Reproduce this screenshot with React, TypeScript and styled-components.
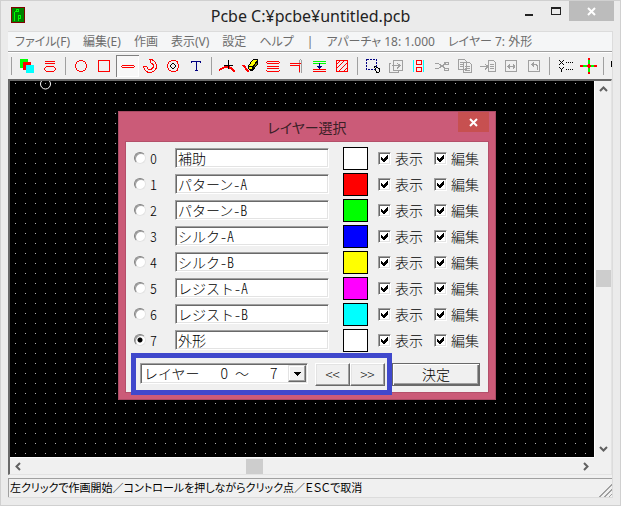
import React, { useState } from 'react';
import styled, { createGlobalStyle, css } from 'styled-components';

const uiFont = '"Noto Sans", "Noto Sans CJK JP", sans-serif';
const gothicFont = '"Noto Sans CJK JP", sans-serif';

const GlobalStyle = createGlobalStyle`
  * { box-sizing: border-box; }
  body { margin: 0; }
  button, input, select { font: inherit; color: inherit; margin: 0; padding: 0; border-radius: 0; }
`;

const Window = styled.main`
  position: relative;
  display: flex;
  flex-direction: column;
  height: 100vh;
  min-height: 440px;
  padding: 0 7px 7px;
  background: #ebebeb;
  border: 1px solid #d0d0d0;
  overflow: hidden;
  font-family: ${uiFont};
  font-size: 12px;
`;

const TitleBar = styled.header`
  position: relative;
  display: flex;
  justify-content: center;
  flex: 0 0 30px;
`;

const AppIcon = styled.svg`
  position: absolute;
  left: 3px;
  top: 6px;
`;

const Title = styled.h1`
  margin: 0;
  font-size: 16px;
  font-weight: 400;
  line-height: 30px;
  color: #222;
`;

const WindowControls = styled.div`
  position: absolute;
  right: -1px;
  top: 0;
  display: flex;
`;

const ControlButton = styled.button<{ $close?: boolean; $wide?: boolean }>`
  width: ${p => (p.$close ? 45 : p.$wide ? 26 : 28)}px;
  height: 20px;
  border: 0;
  background: ${p => (p.$close ? '#bcbcbc' : 'transparent')};
  svg { display: block; margin: auto; }
`;

const Client = styled.section`
  display: flex;
  flex-direction: column;
  flex: 1;
  min-height: 0;
  background: #f0f0f0;
  border: 1px solid #dcdcdc;
  border-width: 0 1px 1px 0;
`;

const MenuBar = styled.nav`
  display: flex;
  flex: 0 0 20px;
  align-items: center;
  gap: 13px;
  padding-left: 7px;
  background: #f5f6f7;
  border-top: 1px solid #dcdcdc;
  color: #6d6d6d;
  white-space: nowrap;
  overflow: hidden;
  font-feature-settings: "palt";
`;

const MenuItem = styled.button`
  border: 0;
  background: none;
  line-height: 18px;
`;

const MenuStatus = styled.span`
  line-height: 18px;
`;

const ToolBar = styled.div`
  display: flex;
  flex: 0 0 28px;
  padding: 2px 0 0;
  border-top: 1px solid #a0a0a0;
  box-shadow: inset 0 1px #fff;
  overflow: hidden;
`;

const Separator = styled.span`
  flex: 0 0 8px;
  height: 18px;
  margin-top: 3px;
  background: linear-gradient(#a0a0a0, #a0a0a0) 3px 0 / 1px 100% no-repeat;
`;

const ToolButton = styled.button<{ $pressed?: boolean }>`
  flex: 0 0 23px;
  height: 22px;
  border: 0;
  margin-top: 1px;
  background: none;
  svg { display: block; }
  ${p => p.$pressed && css`
    background: #f8f8f8;
    box-shadow: inset 1px 1px #808080, inset -1px -1px #fff;
  `}
`;

const Workspace = styled.div`
  display: grid;
  grid-template-columns: 1fr 17px;
  grid-template-rows: 1fr 17px;
  flex: 1;
  min-height: 0;
  border: solid;
  border-width: 2px 1px 1px 2px;
  border-color: #696969 #e3e3e3 #e3e3e3 #696969;
`;

const Board = styled.div`
  position: relative;
  overflow: hidden;
  background: #000;
  svg { position: absolute; inset: 0; }
`;

const ScrollTrack = styled.div<{ $vertical?: boolean }>`
  display: flex;
  flex-direction: ${p => (p.$vertical ? 'column' : 'row')};
  align-items: center;
  background: #f0f0f0;
  border: 0 solid #fff;
  border-width: ${p => (p.$vertical ? '0 0 0 1px' : '1px 0 0')};
`;

const ScrollArrow = styled.button`
  flex: 0 0 17px;
  width: 16px;
  height: 16px;
  border: 0;
  background: none;
  svg { display: block; margin: auto; }
`;

const ScrollSpace = styled.span<{ $grow: number }>`
  flex: ${p => p.$grow} 1 0;
`;

const ScrollThumb = styled.span<{ $vertical?: boolean }>`
  width: ${p => (p.$vertical ? 15 : 17)}px;
  height: ${p => (p.$vertical ? 17 : 15)}px;
  background: #cdcdcd;
`;

const StatusBar = styled.footer`
  display: flex;
  flex: 0 0 19px;
  justify-content: space-between;
  align-items: flex-end;
  margin-top: 3px;
  padding-left: 1px;
  border-top: 1px solid #a0a0a0;
  border-left: 1px solid #a0a0a0;
  color: #000;
  font-size: 11px;
  white-space: nowrap;
  span { line-height: 18px; font-feature-settings: "palt"; }
`;

const Dialog = styled.section`
  position: absolute;
  left: 117px;
  top: 110px;
  display: flex;
  flex-direction: column;
  width: 378px;
  padding: 0 6px 6px;
  background: #cb5b78;
  border: 1px solid #a94b64;
  font-family: ${gothicFont};
  font-size: 14px;
  font-weight: 300;
  font-feature-settings: "hwid";
  color: #000;
`;

const DialogTitleBar = styled.header`
  position: relative;
  height: 29px;
`;

const DialogTitle = styled.h2`
  margin: 0;
  font: 400 14px/30px ${gothicFont};
  font-feature-settings: "palt";
  text-align: center;
  color: #3b2027;
`;

const DialogClose = styled.button`
  position: absolute;
  right: 0;
  top: 0;
  width: 31px;
  height: 20px;
  border: 0;
  background: #c75050;
  svg { display: block; margin: auto; }
`;

const DialogBody = styled.form`
  padding: 3px 0 6px;
  background: #f0f0f0;
  border: 1px solid #b4506a;
`;

const LayerRow = styled.div`
  display: grid;
  grid-template-columns: 41px 154px 14px 25px 10px 56px 56px;
  align-items: center;
  height: 26px;
  padding-left: 8px;
  line-height: 20px;
  & > :nth-child(3) { grid-column: 4; }
  & > :nth-child(4) { grid-column: 6; }
`;

const Choice = styled.label`
  display: flex;
  align-items: center;
  gap: 4px;
`;

const Radio = styled.input`
  appearance: none;
  width: 12px;
  height: 12px;
  border: 1px solid;
  border-color: #808080 #e3e3e3 #e3e3e3 #808080;
  border-radius: 50%;
  background: #fff;
  box-shadow: inset 1px 1px #a0a0a0;
  &:checked { background: radial-gradient(circle, #000 2px, #fff 3px); }
`;

const sunken = css`
  border: 1px solid;
  border-color: #a0a0a0 #fff #fff #a0a0a0;
  box-shadow: inset 1px 1px #696969, inset -1px -1px #e3e3e3;
`;

const NameField = styled.input`
  ${sunken}
  width: 100%;
  height: 20px;
  padding-left: 2px;
  background: #fff;
  font-feature-settings: "hwid";
`;

const Swatch = styled.button<{ $color: string }>`
  height: 23px;
  border: 1px solid #000;
  background: ${p => p.$color};
`;

const CheckLabel = styled.label`
  display: flex;
  align-items: center;
  gap: 4px;
  white-space: nowrap;
`;

const CheckBox = styled.span`
  ${sunken}
  display: grid;
  width: 13px;
  height: 13px;
  background: #fff;
  input { appearance: none; grid-area: 1 / 1; width: 11px; height: 11px; }
  svg { grid-area: 1 / 1; pointer-events: none; visibility: hidden; }
  input:checked + svg { visibility: visible; }
`;

const Footer = styled.div`
  display: flex;
  gap: 7px;
  margin: 10px 8px 0 14px;
`;

const Combo = styled.div`
  ${sunken}
  display: grid;
  grid-template-columns: 1fr 18px;
  width: 168px;
  height: 21px;
  padding: 1px;
  background: #fff;
  select {
    grid-area: 1 / 1 / 2 / 3;
    appearance: none;
    border: 0;
    background: none;
    padding: 0 18px 0 2px;
    font-feature-settings: normal;
    line-height: 17px;
    outline: 0;
  }
`;

const ComboArrow = styled.span`
  grid-area: 1 / 2;
  display: grid;
  place-items: center;
  pointer-events: none;
  background: #f0f0f0;
  border: 1px solid;
  border-color: #e3e3e3 #696969 #696969 #e3e3e3;
  box-shadow: inset -1px -1px #a0a0a0, inset 1px 1px #fff;
`;

const PageButtons = styled.div`
  display: flex;
`;

const PushButton = styled.button<{ $wide?: boolean }>`
  flex: none;
  width: ${p => (p.$wide ? 88 : 35)}px;
  height: 23px;
  background: #f0f0f0;
  border: 1px solid;
  border-color: ${p => (p.$wide ? '#696969' : '#fff #696969 #696969 #fff')};
  box-shadow: ${p => (p.$wide
    ? 'inset 1px 1px #fff, inset -1px -1px #696969, inset -2px -2px #a0a0a0'
    : 'inset -1px -1px #a0a0a0, inset 1px 1px #e3e3e3')};
  line-height: 19px;
  font-feature-settings: "hwid";
`;

const Highlight = styled.span`
  position: absolute;
  left: 12px;
  bottom: 4px;
  width: 261px;
  height: 42px;
  border: 5px solid #3f48cc;
  pointer-events: none;
`;

const red = '#f00';
const grey = '#a0a0a0';
const navy = '#000080';

const glyphs: Record<string, React.ReactNode> = {
  レイヤー: <><path fill="#0f0" d="M4 4h8v9H4z" /><path fill={red} d="M7 7h8v8H7z" /><path fill="#0ff" d="M10 10h8v8h-8z" /></>,
  アパーチャ: <path stroke={red} d="M6 6.5h10M6 8.5h10M7 11.5h8M7 16.5h8M5.5 13v2M16.5 13v2M6 12.5h1M15 12.5h1M6 15.5h1M15 15.5h1" />,
  円: <path stroke={red} d="M9 5.500h4M9 16.500h4M5.500 9v4M16.500 9v4M7 6.500h2M13 6.500h2M7 15.500h2M13 15.500h2M6.500 7v2M15.500 7v2M6.500 13v2M15.500 13v2" />,
  四角: <path stroke={red} d="M5.5 5.5h11v11h-11z" />,
  ライン: <path stroke={red} d="M6 10.5h12M6 12.5h12M5 11.5h1M18 11.5h1" />,
  円弧: <path stroke={red} d="M11 4.500A6.500 6.500 0 1 1 4.500 11.500h3L9 14l3 .500 2-2v-3L11.500 7.500z" />,
  ドーナツ: <>
    <path stroke={red} d="M9 5.500h5M9 16.500h5M5.500 9v4M16.500 9v4M7 6.500h2M14 6.500h2M7 15.500h2M14 15.500h2M6.500 7v2M15.500 7v2M6.500 13v2M15.500 13v2" />
    <path stroke="#000" d="M10 8.500h2M10 13.500h2M8.500 10v2M13.500 10v2M9 9.500h1M12 9.500h1M9 12.500h1M12 12.500h1" />
  </>,
  文字: <path stroke={navy} d="M6.500 8V6.500h9V8M11.500 6v10M10 15.500h3" />,
  線編集: <><path stroke={red} strokeWidth="2" d="M3 15l6-3h4l3 2 3 3" /><path stroke="#000" d="M8 10.500h9M12.500 5v9" /></>,
  消去: <>
    <path stroke={red} strokeWidth="2" d="M4 10l5 6h1" />
    <path fill="#000" d="M14 4h4l1 1v4l-5 7h-3l-2-2v-3z" />
    <path fill="#ff0" d="M14 5h4l-4 6h-4zM10 12h3v2h-3z" />
    <path fill="#808000" d="M15 12l3-5v2l-3 4z" />
  </>,
  平行線: <path stroke={red} d="M5 6.500h12M4 7.500h1M17 7.500h1M5 8.500h12M5 11.500h12M5 13.500h12M5 16.500h12M4 15.500h1M17 15.500h1" />,
  延長: <><path stroke={grey} d="M14.500 5v13M16.500 5v13M15 4.500h1" /><path stroke={red} d="M5 8.500h11M5 10.500h10M14.500 10v7" /></>,
  間隔: <><path stroke="#0f0" d="M5 6.500h13M5 8.500h13" /><path stroke={red} d="M5 14.500h13M5 16.500h13" /><path stroke={navy} d="M11.500 8v6M9 11.500h5M10 12.500h3" /></>,
  塗り: <path stroke={red} d="M5.500 5.500h11v11h-11zM5 10l5-5M5 14l9-9M7 17L17 7M12 17l5-5" />,
  範囲選択: <><path stroke={navy} strokeDasharray="2 1" d="M4.500 4.500h10v10h-10z" /><path fill="#f0f0f0" stroke="#000" d="M12.500 11.500l5 2v3l-1 1h-2z" /></>,
  移動: <path stroke={grey} d="M8.500 5.500h9v10h-9zM6 8.500H4.500v9h9V16M7 10.500h7M12 8l3 2.500-3 3" />,
  部品: <><path stroke="#0ff" d="M5.500 5v12M15.500 5v12" /><path stroke={red} d="M8.500 5.500h5v4h-5zM8.500 12.500h5v4h-5z" /></>,
  切り取り: <path stroke={grey} d="M4 8.500h3l8 5M4 13.500h3l8-5M13 7.500h4v2h-4zM13 13.500h4v2h-4z" />,
  コピー: <path fill="#f0f0f0" stroke={grey} d="M4.500 4.500h6l2 2v8h-8zM9.500 7.500h6l2 2v8h-8zM6 7.500h3M6 9.500h3M6 11.500h3M11 11.500h5M11 13.500h5M11 15.500h5" />,
  貼り付け: <path stroke={grey} d="M11.500 5.500h5l2 2v9h-7zM13 9.500h4M13 11.500h4M13 13.500h4M3 11.500h7M8 9l3 2.500-3 3" />,
  左右反転: <path stroke={grey} d="M5.500 5.500h11v11h-11zM7 11.500h8M9.500 9v5M13.500 9v5M8.500 10v3M14.500 10v3" />,
  回転: <path stroke={grey} d="M5.500 5.500h11v11h-11zM8 9.500h5l1 1v4M8 9.500h2M9.500 8v3M10.500 7v5" />,
  座標: <><path stroke="#000" d="M5 5.500h1M9 5.500h1M6 6.500h1M8 6.500h1M7 7.500h1M6 8.500h1M8 8.500h1M5 9.500h1M9 9.500h1M5 12.500h1M9 12.500h1M6 13.500h1M8 13.500h1M7.500 14v3" /><path stroke="#000" strokeDasharray="1 1" d="M12 7.500h7M12 14.500h7" /></>,
  原点: <><path stroke="#0f0" strokeWidth="2" d="M5 11h14M12 5v13" /><path stroke={red} strokeWidth="2" d="M3 11h3M17 11h3M12 3v2M12 17v2M10 11h4M12 9v4" /></>,
  拡大: <path stroke="#000" d="M7 5.500H5l-2 2v3l2 2h3" />,
};

const toolGroups = [
  ['レイヤー', 'アパーチャ'],
  ['円', '四角', 'ライン', '円弧', 'ドーナツ', '文字'],
  ['線編集', '消去', '平行線', '延長', '間隔', '塗り'],
  ['範囲選択', '移動', '部品', '切り取り', 'コピー', '貼り付け', '左右反転', '回転'],
  ['座標', '原点'],
  ['拡大'],
];

const layers = [
  ['補助', '#fff'],
  ['パターン-A', '#f00'],
  ['パターン-B', '#0f0'],
  ['シルク-A', '#00f'],
  ['シルク-B', '#ff0'],
  ['レジスト-A', '#f0f'],
  ['レジスト-B', '#0ff'],
  ['外形', '#fff'],
];

const menus = ['ファイル(F)', '編集(E)', '作画', '表示(V)', '設定', 'ヘルプ'];

const Cross = () => (
  <svg width="9" height="9" viewBox="0 0 9 9" stroke="#fff" strokeWidth="2"><path d="M1 1l7 7M8 1l-7 7" /></svg>
);

const arrows = {
  up: 'M1 6l3.500-3.500L8 6',
  down: 'M1 3l3.500 3.500L8 3',
  left: 'M6 1L2.500 4.500 6 8',
  right: 'M3 1l3.500 3.500L3 8',
};

const Arrow = ({ to }: { to: keyof typeof arrows }) => (
  <ScrollArrow type="button" aria-label={to}>
    <svg width="9" height="9" fill="none" stroke="#606060" strokeWidth="2"><path d={arrows[to]} /></svg>
  </ScrollArrow>
);

const Check = ({ text }: { text: string }) => (
  <CheckLabel>
    <CheckBox>
      <input type="checkbox" defaultChecked />
      <svg width="11" height="11" shapeRendering="crispEdges"><path d="M2 4v3l2 2h1l4-4V2L4.500 6z" /></svg>
    </CheckBox>
    {text}
  </CheckLabel>
);

export default function App() {
  const [active, setActive] = useState(7);
  return (
    <>
      <GlobalStyle />
      <Window>
        <TitleBar>
          <AppIcon width="14" height="16" shapeRendering="crispEdges" fill="none">
            <path fill="#008000" stroke="#800000" d="M.5.5h13v15H.5z" />
            <path stroke="#0f0" d="M3.500 14V5.500l2-2M5.500 2.500h2v2h-2zM7.500 14V8.500h2v3h-2" />
          </AppIcon>
          <Title>Pcbe C:¥pcbe¥untitled.pcb</Title>
          <WindowControls>
            <ControlButton type="button" aria-label="最小化">
              <svg width="10" height="12"><path fill="#222" d="M1 9h8v2H1z" /></svg>
            </ControlButton>
            <ControlButton type="button" $wide aria-label="最大化">
              <svg width="10" height="9"><path fill="#222" fillRule="evenodd" d="M0 0h10v8H0zM1 2v5h8V2z" /></svg>
            </ControlButton>
            <ControlButton type="button" $close aria-label="閉じる"><Cross /></ControlButton>
          </WindowControls>
        </TitleBar>
        <Client>
          <MenuBar>
            {menus.map(m => <MenuItem type="button" key={m}>{m}</MenuItem>)}
            <MenuStatus>|</MenuStatus>
            <MenuStatus>アパーチャ 18: 1.000</MenuStatus>
            <MenuStatus>レイヤー 7: 外形</MenuStatus>
          </MenuBar>
          <ToolBar role="toolbar">
            {toolGroups.map(group => (
              <React.Fragment key={group[0]}>
                <Separator />
                {group.map(name => (
                  <ToolButton type="button" key={name} aria-label={name} $pressed={name === 'ライン'}>
                    <svg width="23" height="22" fill="none" shapeRendering="crispEdges">{glyphs[name]}</svg>
                  </ToolButton>
                ))}
              </React.Fragment>
            ))}
          </ToolBar>
          <Workspace>
            <Board>
              <svg width="100%" height="100%">
                <defs>
                  <pattern id="grid" width="10" height="10" patternUnits="userSpaceOnUse">
                    <path fill="#b0b0b0" d="M5 2h1v1H5z" />
                  </pattern>
                </defs>
                <rect width="100%" height="100%" fill="url(#grid)" />
                <circle cx="35.500" cy="3" r="5" fill="none" stroke="#fff" />
              </svg>
            </Board>
            <ScrollTrack $vertical>
              <Arrow to="up" />
              <ScrollSpace $grow={53} />
              <ScrollThumb $vertical />
              <ScrollSpace $grow={47} />
              <Arrow to="down" />
            </ScrollTrack>
            <ScrollTrack>
              <Arrow to="left" />
              <ScrollSpace $grow={41} />
              <ScrollThumb />
              <ScrollSpace $grow={59} />
              <Arrow to="right" />
            </ScrollTrack>
          </Workspace>
          <StatusBar>
            <span>左クリックで作画開始／コントロールを押しながらクリック点／ＥＳＣで取消</span>
            <svg width="13" height="14" stroke="#a0a0a0"><path d="M0 14L13 1M1 14L13 2M5 14l8-8M6 14l7-7M10 14l3-3" /></svg>
          </StatusBar>
        </Client>
        <Dialog role="dialog" aria-labelledby="dialog-title">
          <DialogTitleBar>
            <DialogTitle id="dialog-title">レイヤー選択</DialogTitle>
            <DialogClose type="button" aria-label="閉じる"><Cross /></DialogClose>
          </DialogTitleBar>
          <DialogBody onSubmit={e => e.preventDefault()}>
            {layers.map(([name, color], i) => (
              <LayerRow key={name}>
                <Choice>
                  <Radio type="radio" name="layer" checked={active === i} onChange={() => setActive(i)} />
                  {i}
                </Choice>
                <NameField defaultValue={name} aria-label={`レイヤー ${i}`} />
                <Swatch type="button" $color={color} aria-label={`色 ${i}`} />
                <Check text="表示" />
                <Check text="編集" />
              </LayerRow>
            ))}
            <Footer>
              <Combo>
                <select aria-label="レイヤー範囲">
                  <option>{'レイヤー\u3000\u20020\u2002～\u3000\u20027'}</option>
                </select>
                <ComboArrow><svg width="7" height="4" shapeRendering="crispEdges"><path d="M0 0h7L3.500 4z" /></svg></ComboArrow>
              </Combo>
              <PageButtons>
                <PushButton type="button">&lt;&lt;</PushButton>
                <PushButton type="button">&gt;&gt;</PushButton>
              </PageButtons>
              <PushButton $wide>決定</PushButton>
            </Footer>
          </DialogBody>
          <Highlight />
        </Dialog>
      </Window>
    </>
  );
}
